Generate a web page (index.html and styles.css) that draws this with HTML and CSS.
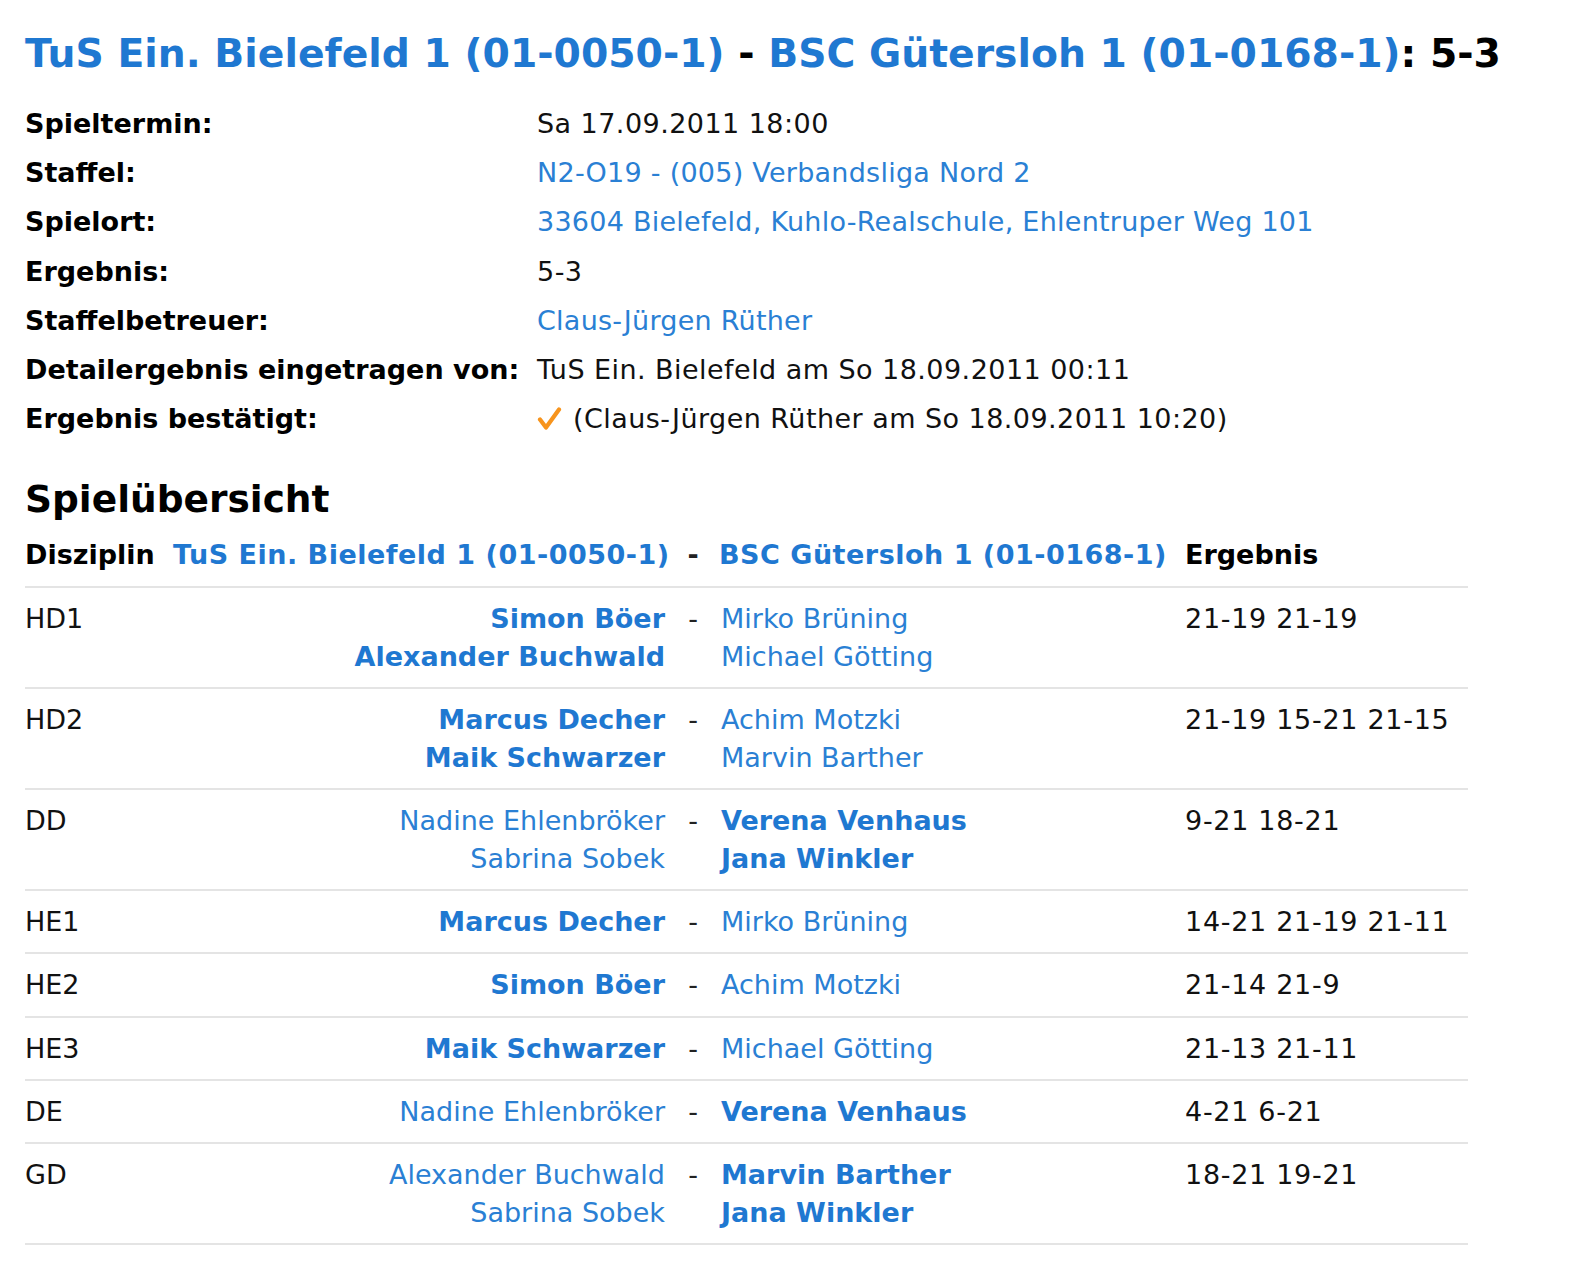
FILE: index.html
```html
<!DOCTYPE html>
<html lang="de">
<head>
<meta charset="utf-8">
<title>Spielbericht</title>
<link rel="stylesheet" href="styles.css">
</head>
<body>
<div class="page">
  <h1 class="title"><span class="blue">TuS Ein. Bielefeld 1 (01-0050-1)</span> - <span class="blue">BSC Gütersloh 1 (01-0168-1)</span>: 5-3</h1>

  <div class="info">
    <div class="label">Spieltermin:</div>
    <div class="value">Sa 17.09.2011 18:00</div>
    <div class="label">Staffel:</div>
    <div class="value link">N2-O19 - (005) Verbandsliga Nord 2</div>
    <div class="label">Spielort:</div>
    <div class="value link">33604 Bielefeld, Kuhlo-Realschule, Ehlentruper Weg 101</div>
    <div class="label">Ergebnis:</div>
    <div class="value">5-3</div>
    <div class="label">Staffelbetreuer:</div>
    <div class="value link">Claus-Jürgen Rüther</div>
    <div class="label">Detailergebnis eingetragen von:</div>
    <div class="value">TuS Ein. Bielefeld am So 18.09.2011 00:11</div>
    <div class="label">Ergebnis bestätigt:</div>
    <div class="value"><svg class="check" viewBox="0 0 24 24" width="25" height="24"><path d="M2.5 12.5 L8.5 20.5 L21.5 2.5" fill="none" stroke="#f7941d" stroke-width="4.2" stroke-linecap="round" stroke-linejoin="round"/></svg> (Claus-Jürgen Rüther am So 18.09.2011 10:20)</div>
  </div>

  <h2 class="section">Spielübersicht</h2>

  <table class="matches">
    <colgroup>
      <col class="c-disc"><col class="c-home"><col class="c-dash"><col class="c-away"><col class="c-res">
    </colgroup>
    <thead>
      <tr>
        <th class="disc">Disziplin</th>
        <th class="home-h blue">TuS Ein. Bielefeld 1 (01-0050-1)</th>
        <th class="dash">-</th>
        <th class="away blue">BSC Gütersloh 1 (01-0168-1)</th>
        <th class="res">Ergebnis</th>
      </tr>
    </thead>
    <tbody>
      <tr>
        <td class="disc">HD1</td>
        <td class="home"><div class="win">Simon Böer</div><div class="win">Alexander Buchwald</div></td>
        <td class="dash">-</td>
        <td class="away"><div>Mirko Brüning</div><div>Michael Götting</div></td>
        <td class="res">21-19 21-19</td>
      </tr>
      <tr>
        <td class="disc">HD2</td>
        <td class="home"><div class="win">Marcus Decher</div><div class="win">Maik Schwarzer</div></td>
        <td class="dash">-</td>
        <td class="away"><div>Achim Motzki</div><div>Marvin Barther</div></td>
        <td class="res">21-19 15-21 21-15</td>
      </tr>
      <tr>
        <td class="disc">DD</td>
        <td class="home"><div>Nadine Ehlenbröker</div><div>Sabrina Sobek</div></td>
        <td class="dash">-</td>
        <td class="away"><div class="win">Verena Venhaus</div><div class="win">Jana Winkler</div></td>
        <td class="res">9-21 18-21</td>
      </tr>
      <tr>
        <td class="disc">HE1</td>
        <td class="home"><div class="win">Marcus Decher</div></td>
        <td class="dash">-</td>
        <td class="away"><div>Mirko Brüning</div></td>
        <td class="res">14-21 21-19 21-11</td>
      </tr>
      <tr>
        <td class="disc">HE2</td>
        <td class="home"><div class="win">Simon Böer</div></td>
        <td class="dash">-</td>
        <td class="away"><div>Achim Motzki</div></td>
        <td class="res">21-14 21-9</td>
      </tr>
      <tr>
        <td class="disc">HE3</td>
        <td class="home"><div class="win">Maik Schwarzer</div></td>
        <td class="dash">-</td>
        <td class="away"><div>Michael Götting</div></td>
        <td class="res">21-13 21-11</td>
      </tr>
      <tr>
        <td class="disc">DE</td>
        <td class="home"><div>Nadine Ehlenbröker</div></td>
        <td class="dash">-</td>
        <td class="away"><div class="win">Verena Venhaus</div></td>
        <td class="res">4-21 6-21</td>
      </tr>
      <tr>
        <td class="disc">GD</td>
        <td class="home"><div>Alexander Buchwald</div><div>Sabrina Sobek</div></td>
        <td class="dash">-</td>
        <td class="away"><div class="win">Marvin Barther</div><div class="win">Jana Winkler</div></td>
        <td class="res">18-21 19-21</td>
      </tr>
    </tbody>
  </table>
</div>
</body>
</html>
```

FILE: styles.css
```css
html, body {
  margin: 0;
  padding: 0;
  background: #ffffff;
}

body {
  font-family: "DejaVu Sans", Verdana, sans-serif;
  color: #111111;
  font-size: 27px;
}

.page {
  padding: 30px 0 40px 25px;
}

.blue {
  color: #1f78d1;
}

.title {
  margin: 0;
  font-size: 39.3px;
  line-height: 48px;
  font-weight: bold;
  color: #000000;
  white-space: nowrap;
}

.info {
  display: grid;
  grid-template-columns: 512px 1fr;
  margin-top: 21px;
}

.label,
.value {
  line-height: 49.2px;
  white-space: nowrap;
}

.label {
  font-weight: bold;
  color: #000000;
}

.value {
  letter-spacing: 0.45px;
}

.value.link {
  color: #2a80d4;
  letter-spacing: 0.25px;
}

.check {
  vertical-align: -3px;
  margin-right: 2px;
}

.section {
  margin: 32px 0 0 0;
  font-size: 37.5px;
  line-height: 48px;
  font-weight: bold;
  color: #000000;
}

.matches {
  margin-top: 13px;
  border-collapse: collapse;
  table-layout: fixed;
  width: 1443px;
}

.c-disc { width: 148px; }
.c-home { width: 500px; }
.c-dash { width: 40px; }
.c-away { width: 464px; }
.c-res  { width: 291px; }

.matches th,
.matches td {
  padding: 0;
  line-height: 37.7px;
  vertical-align: top;
  white-space: nowrap;
  text-align: left;
}

.matches th {
  font-weight: bold;
  color: #000000;
  padding-bottom: 12px;
  border-bottom: 2px solid #e4e4e4;
}

.matches th.blue {
  color: #1f78d1;
  letter-spacing: 0.5px;
}

.matches td {
  padding-top: 11.8px;
  padding-bottom: 11.8px;
  border-bottom: 2px solid #e4e4e4;
}

.matches td.home {
  text-align: right;
  padding-right: 8px;
  color: #2a80d4;
}

.matches .dash {
  text-align: center;
  font-weight: bold;
  color: #222222;
}

.matches td.dash {
  font-weight: normal;
}

.matches .away {
  padding-left: 6px;
  color: #2a80d4;
}

.matches td.away {
  padding-left: 8px;
}

.matches .res {
  padding-left: 8px;
}

.matches td.res {
  letter-spacing: 0.7px;
}

.matches .win {
  font-weight: bold;
  color: #1f78d1;
}
```
